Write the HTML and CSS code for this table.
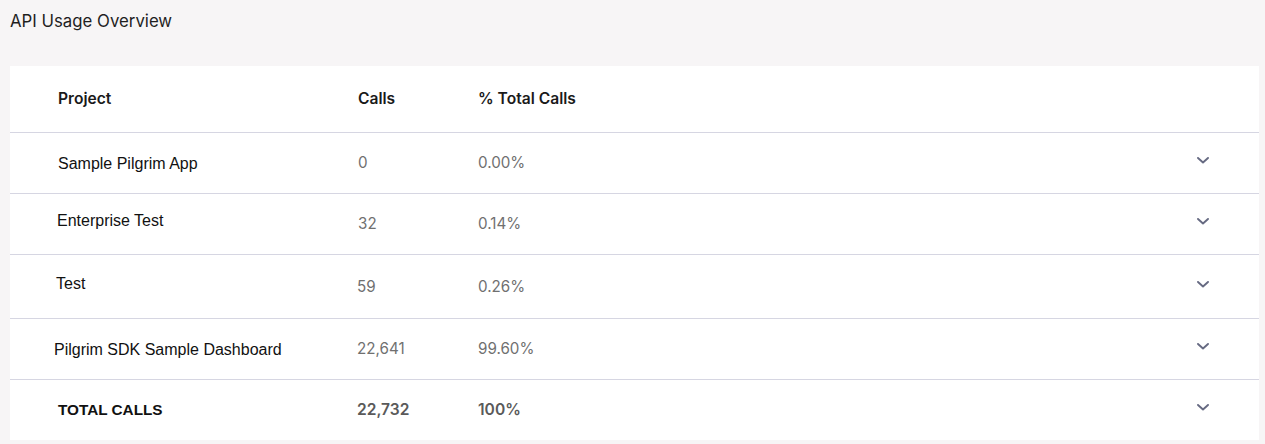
FILE: index.html
```html
<!DOCTYPE html>
<html>
<head>
<meta charset="utf-8">
<link rel="stylesheet" href="styles.css">
</head>
<body>
<div class="page">
  <h1 class="title">API Usage Overview</h1>
  <div class="card">
    <div class="row head">
      <div class="cell project">Project</div>
      <div class="cell calls">Calls</div>
      <div class="cell pct">% Total Calls</div>
      <div class="cell chev"></div>
    </div>
    <div class="row r1">
      <div class="cell project p58">Sample Pilgrim App</div>
      <div class="cell calls">0</div>
      <div class="cell pct">0.00%</div>
      <div class="cell chev"><svg viewBox="0 0 12 7" width="12" height="7"><path d="M1 1l5 4.5L11 1" fill="none" stroke="#666a82" stroke-width="1.9" stroke-linecap="round" stroke-linejoin="round"/></svg></div>
    </div>
    <div class="row r2">
      <div class="cell project p57 up">Enterprise Test</div>
      <div class="cell calls">32</div>
      <div class="cell pct">0.14%</div>
      <div class="cell chev"><svg viewBox="0 0 12 7" width="12" height="7"><path d="M1 1l5 4.5L11 1" fill="none" stroke="#666a82" stroke-width="1.9" stroke-linecap="round" stroke-linejoin="round"/></svg></div>
    </div>
    <div class="row r3">
      <div class="cell project p56 up">Test</div>
      <div class="cell calls c357">59</div>
      <div class="cell pct">0.26%</div>
      <div class="cell chev"><svg viewBox="0 0 12 7" width="12" height="7"><path d="M1 1l5 4.5L11 1" fill="none" stroke="#666a82" stroke-width="1.9" stroke-linecap="round" stroke-linejoin="round"/></svg></div>
    </div>
    <div class="row r4">
      <div class="cell project p54">Pilgrim SDK Sample Dashboard</div>
      <div class="cell calls c357">22,641</div>
      <div class="cell pct">99.60%</div>
      <div class="cell chev"><svg viewBox="0 0 12 7" width="12" height="7"><path d="M1 1l5 4.5L11 1" fill="none" stroke="#666a82" stroke-width="1.9" stroke-linecap="round" stroke-linejoin="round"/></svg></div>
    </div>
    <div class="row total">
      <div class="cell project p58">TOTAL CALLS</div>
      <div class="cell calls c357">22,732</div>
      <div class="cell pct">100%</div>
      <div class="cell chev"><svg viewBox="0 0 12 7" width="12" height="7"><path d="M1 1l5 4.5L11 1" fill="none" stroke="#666a82" stroke-width="1.9" stroke-linecap="round" stroke-linejoin="round"/></svg></div>
    </div>
  </div>
</div>
</body>
</html>
```
FILE: styles.css
```css
html, body {
  margin: 0;
  padding: 0;
  background: #f7f5f6;
}
.page {
  padding: 0 6px 0 10px;
  font-family: Inter, "Liberation Sans", sans-serif;
}
.title {
  margin: 0;
  height: 66px;
  padding-top: 11px;
  box-sizing: border-box;
  font-size: 16.8px;
  font-weight: 400;
  line-height: 20px;
  color: #1f1f1f;
}
.card {
  background: #fff;
  width: 1249px;
}
.row {
  display: grid;
  grid-template-columns: 348px 120px 1fr 62px;
  align-items: center;
  border-bottom: 1px solid #d6d6e2;
}
.row.total {
  border-bottom: none;
}
.head { height: 66px; }
.r1 { height: 60px; }
.r2 { height: 60px; }
.r3 { height: 63px; }
.r4 { height: 60px; }
.total { height: 60px; }

.cell {
  line-height: 20px;
}
.project {
  padding-left: 48px;
  font-family: "Liberation Sans", Arial, sans-serif;
  font-size: 16px;
  color: #111;
}
.r1 .project, .r4 .project { position: relative; top: 1px; }
.p58 { padding-left: 48px; }
.p57 { padding-left: 47px; }
.p56 { padding-left: 46px; }
.p54 { padding-left: 44px; }
.up { position: relative; top: -3px; }

.calls, .pct {
  font-size: 15.2px;
  color: #707070;
}
.c357 { margin-left: -1px; }

.head .cell {
  font-family: Inter, sans-serif;
  font-size: 15.6px;
  font-weight: 600;
  color: #1a1a1a;
}
.head .project { padding-left: 48px; }

.total .project {
  font-family: "Liberation Sans", Arial, sans-serif;
  font-weight: 700;
  font-size: 15.3px;
  color: #111;
}
.total .calls, .total .pct {
  font-size: 15.6px;
  font-weight: 600;
  color: #5a5a5a;
}

.chev {
  display: flex;
  align-items: center;
  padding-bottom: 5px;
}
.chev svg { display: block; }
```
